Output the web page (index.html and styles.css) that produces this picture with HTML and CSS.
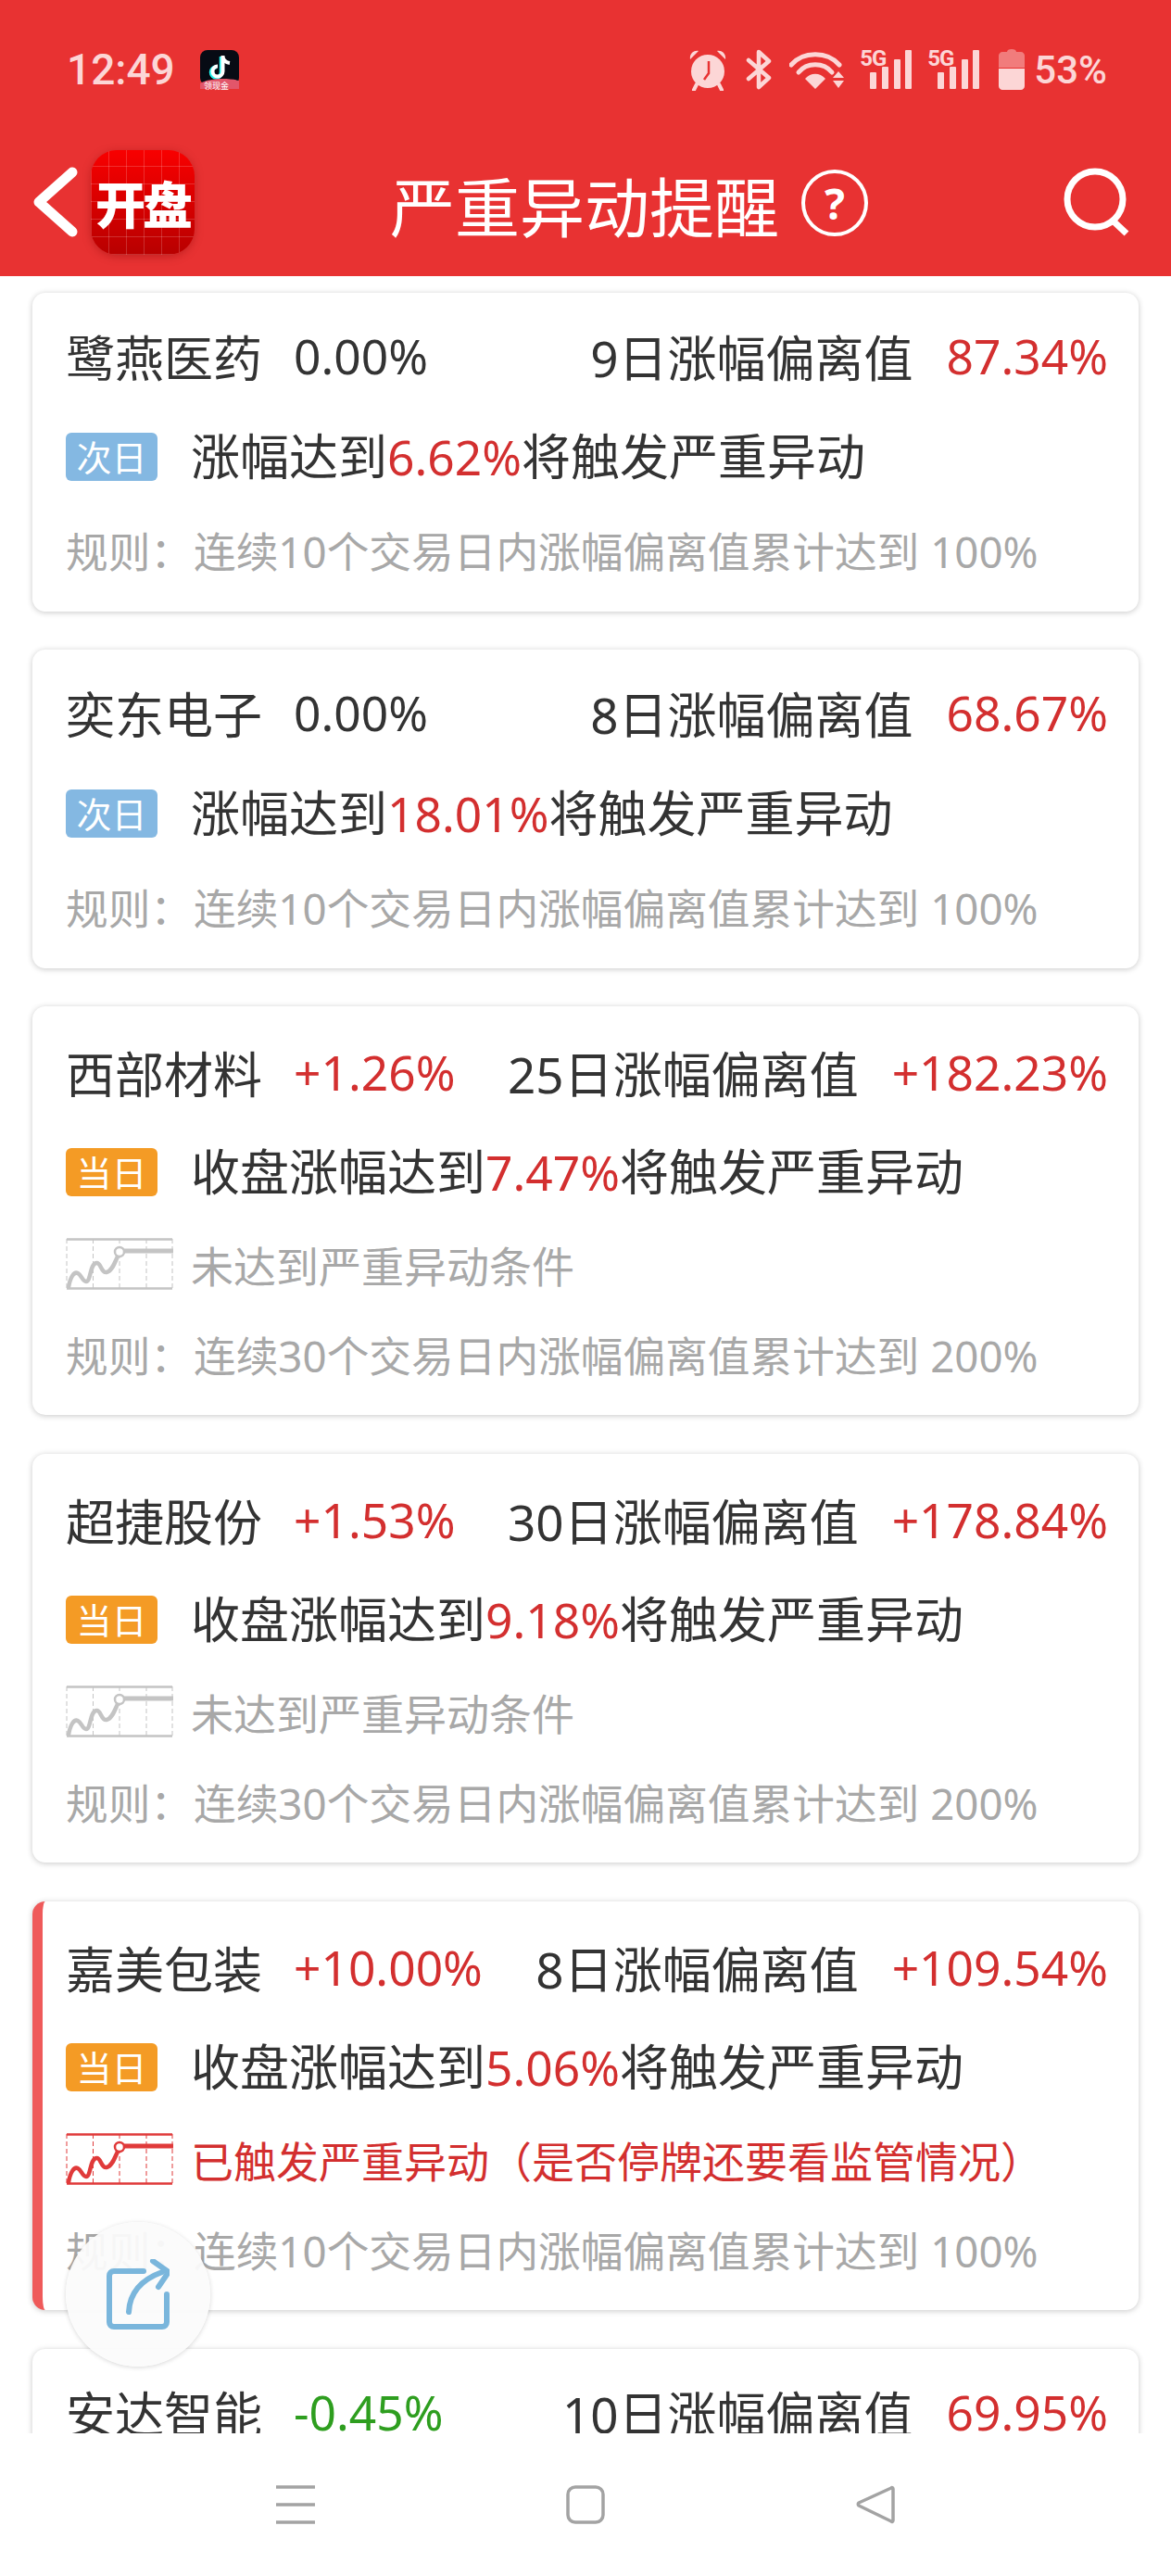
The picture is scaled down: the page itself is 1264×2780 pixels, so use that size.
FILE: index.html
```html
<!DOCTYPE html>
<html lang="zh-CN">

<head>
    <meta charset="UTF-8">
    <meta name="viewport" content="width=device-width, initial-scale=1.0">
    <title>严重异动提醒</title>
    <link rel="stylesheet" href="styles.css">
</head>

<body>
    <svg class="defs" width="0" height="0">
        <symbol id="trend" viewBox="0 0 116 56">
            <path d="M1 1.5H115M1 54.5H115" fill="none" stroke="currentColor" stroke-width="2.5" />
            <path d="M1 1V54M29.500 1V54M58 1V54M87 1V54M115 1V54" fill="none" stroke="currentColor" stroke-width="1" stroke-dasharray="5 3" />
            <path d="M3 53C5 42 9 36 13 38C17 40 18 47 22 47C27 47 26 28 33 27C38 26 38 38 44 37C50 36 53 26 56 20" fill="none" stroke="currentColor" stroke-width="4.500" stroke-linecap="round" />
            <circle cx="58" cy="15" r="5" fill="#fff" stroke="currentColor" stroke-width="2.500" />
            <path d="M63 14H116" fill="none" stroke="currentColor" stroke-width="5" />
        </symbol>
        <symbol id="signal" viewBox="0 0 56 42">
            <rect x="11" y="24" width="7" height="18" rx="1" fill="currentColor" />
            <rect x="24" y="18" width="7" height="24" rx="1" fill="currentColor" />
            <rect x="37" y="10" width="7" height="32" rx="1" fill="currentColor" />
            <rect x="49" y="0" width="7" height="42" rx="1" fill="currentColor" />
        </symbol>
    </svg>

    <header class="app-header">
        <div class="status-bar">
            <span class="clock">12:49</span>
            <div class="notif-icon">
                <svg viewBox="0 0 42 42" width="42" height="42">
                    <rect width="42" height="38" rx="8" fill="#070b14" />
                    <path d="M23 7V24A5.500 5.500 0 1 1 17.500 18.500" fill="none" stroke="#25f4ee" stroke-width="4.500" />
                    <path d="M24.500 6V23A5.500 5.500 0 1 1 19 17.500M24.500 7C25 11 28 13.500 32 14" fill="none" stroke="#fff" stroke-width="4" />
                    <path d="M0 36C10 30 30 30 42 33V42H0Z" fill="#e2566a" />
                </svg>
                <span class="notif-label">领现金</span>
            </div>
            <div class="status-icons">
                <svg class="ic-alarm" viewBox="0 0 42 45" width="42" height="45">
                    <path d="M2 11C1 5 6 1 11 2ZM40 11C41 5 36 1 31 2Z" fill="currentColor" />
                    <circle cx="21" cy="24" r="18" fill="currentColor" />
                    <path d="M9 38L6 44M33 38L36 44" stroke="currentColor" stroke-width="4" stroke-linecap="round" />
                    <path d="M22 13V26L17 33" fill="none" stroke="#e83232" stroke-width="2.500" />
                </svg>
                <svg class="ic-bt" viewBox="0 0 28 44" width="28" height="44">
                    <path d="M3 12L25 31L14 41V3L25 13L3 32" fill="none" stroke="currentColor" stroke-width="4.500" stroke-linecap="round" stroke-linejoin="round" />
                </svg>
                <svg class="ic-wifi" viewBox="0 0 60 42" width="60" height="42">
                    <path d="M2 16C15 1 41 1 54 16" fill="none" stroke="currentColor" stroke-width="5" stroke-linecap="round" />
                    <path d="M10 24C19 13 37 13 46 24" fill="none" stroke="currentColor" stroke-width="5" stroke-linecap="round" />
                    <path d="M17 31C23 24 33 24 39 31L28 42Z" fill="currentColor" />
                    <path d="M47 30L53 23L59 30ZM47 33H59L53 41Z" fill="currentColor" />
                </svg>
                <div class="sim sim-first">
                    <span class="sim-label">5G</span>
                    <svg viewBox="0 0 56 42" width="56" height="42"><use href="#signal" /></svg>
                </div>
                <div class="sim sim-second">
                    <span class="sim-label">5G</span>
                    <svg viewBox="0 0 56 42" width="56" height="42"><use href="#signal" /></svg>
                </div>
                <svg class="ic-battery" viewBox="0 0 28 44" width="28" height="44">
                    <path d="M9 3C9 1 11 0 14 0C17 0 19 1 19 3H24C26 3 28 5 28 7V20H0V7C0 5 2 3 4 3Z" fill="currentColor" opacity="0.45" />
                    <path d="M0 21H28V40C28 42 26 44 24 44H4C2 44 0 42 0 40Z" fill="currentColor" />
                </svg>
                <span class="battery-text">53%</span>
            </div>
        </div>
        <div class="toolbar">
            <svg class="ic-back" viewBox="0 0 49 76" width="49" height="76">
                <path d="M43 6L7 38L43 70" fill="none" stroke="#fff" stroke-width="11" stroke-linecap="round" stroke-linejoin="round" />
            </svg>
            <div class="app-logo">开盘</div>
            <h1 class="page-title">严重异动提醒</h1>
            <span class="help-btn">?</span>
            <svg class="ic-search" viewBox="0 0 72 74" width="72" height="74">
                <circle cx="34" cy="34" r="30" fill="none" stroke="#fff" stroke-width="7" />
                <path d="M53 57L68 71" stroke="#fff" stroke-width="7" />
            </svg>
        </div>
    </header>

    <main class="list">
        <section class="card">
            <div class="row-top">
                <span class="name">鹭燕医药</span>
                <span class="pct">0.00%</span>
                <span class="label">9日涨幅偏离值</span>
                <span class="value red">87.34%</span>
            </div>
            <div class="row-trigger">
                <span class="tag tag-next">次日</span>
                <span class="trigger-text">涨幅达到<em class="red">6.62%</em>将触发严重异动</span>
            </div>
            <p class="rule"><span class="rule-key">规则：</span>连续10个交易日内涨幅偏离值累计达到 100%</p>
        </section>

        <section class="card">
            <div class="row-top">
                <span class="name">奕东电子</span>
                <span class="pct">0.00%</span>
                <span class="label">8日涨幅偏离值</span>
                <span class="value red">68.67%</span>
            </div>
            <div class="row-trigger">
                <span class="tag tag-next">次日</span>
                <span class="trigger-text">涨幅达到<em class="red">18.01%</em>将触发严重异动</span>
            </div>
            <p class="rule"><span class="rule-key">规则：</span>连续10个交易日内涨幅偏离值累计达到 100%</p>
        </section>

        <section class="card card-tall">
            <div class="row-top">
                <span class="name">西部材料</span>
                <span class="pct red">+1.26%</span>
                <span class="label">25日涨幅偏离值</span>
                <span class="value red">+182.23%</span>
            </div>
            <div class="row-trigger">
                <span class="tag tag-today">当日</span>
                <span class="trigger-text">收盘涨幅达到<em class="red">7.47%</em>将触发严重异动</span>
            </div>
            <div class="row-state">
                <svg class="trend" width="116" height="56"><use href="#trend" /></svg>
                <span>未达到严重异动条件</span>
            </div>
            <p class="rule"><span class="rule-key">规则：</span>连续30个交易日内涨幅偏离值累计达到 200%</p>
        </section>

        <section class="card card-tall">
            <div class="row-top">
                <span class="name">超捷股份</span>
                <span class="pct red">+1.53%</span>
                <span class="label">30日涨幅偏离值</span>
                <span class="value red">+178.84%</span>
            </div>
            <div class="row-trigger">
                <span class="tag tag-today">当日</span>
                <span class="trigger-text">收盘涨幅达到<em class="red">9.18%</em>将触发严重异动</span>
            </div>
            <div class="row-state">
                <svg class="trend" width="116" height="56"><use href="#trend" /></svg>
                <span>未达到严重异动条件</span>
            </div>
            <p class="rule"><span class="rule-key">规则：</span>连续30个交易日内涨幅偏离值累计达到 200%</p>
        </section>

        <section class="card card-tall card-hit">
            <div class="row-top">
                <span class="name">嘉美包装</span>
                <span class="pct red">+10.00%</span>
                <span class="label">8日涨幅偏离值</span>
                <span class="value red">+109.54%</span>
            </div>
            <div class="row-trigger">
                <span class="tag tag-today">当日</span>
                <span class="trigger-text">收盘涨幅达到<em class="red">5.06%</em>将触发严重异动</span>
            </div>
            <div class="row-state state-hit">
                <svg class="trend" width="116" height="56"><use href="#trend" /></svg>
                <span>已触发严重异动（是否停牌还要看监管情况）</span>
            </div>
            <p class="rule"><span class="rule-key">规则：</span>连续10个交易日内涨幅偏离值累计达到 100%</p>
        </section>

        <section class="card">
            <div class="row-top">
                <span class="name">安达智能</span>
                <span class="pct green">-0.45%</span>
                <span class="label">10日涨幅偏离值</span>
                <span class="value red">69.95%</span>
            </div>
        </section>
    </main>

    <nav class="nav-bar">
        <svg viewBox="0 0 42 42" width="42" height="42">
            <path d="M0 2H42M0 21H42M0 40H42" stroke="#a3a3a3" stroke-width="3.500" />
        </svg>
        <svg viewBox="0 0 42 42" width="42" height="42">
            <rect x="2" y="2" width="38" height="38" rx="8" fill="none" stroke="#a3a3a3" stroke-width="3.500" />
        </svg>
        <svg viewBox="0 0 42 42" width="42" height="42">
            <path d="M38 3C39 2 40 3 40 4V38C40 39 39 40 38 39L3 22C2 21 2 20 3 19Z" fill="none" stroke="#a3a3a3" stroke-width="3.500" stroke-linejoin="round" />
        </svg>
    </nav>

    <button class="share-btn">
        <svg viewBox="0 0 68 76" width="68" height="76">
            <path d="M40 13H8C5 13 3 15 3 18V68C3 71 5 73 8 73H60C63 73 65 71 65 68V38" fill="none" stroke="#7ab6dc" stroke-width="6" stroke-linecap="round" />
            <path d="M24 57C25 36 38 22 60 14" fill="none" stroke="#7ab6dc" stroke-width="6" stroke-linecap="round" />
            <path d="M50 2L67 14L56 30" fill="none" stroke="#7ab6dc" stroke-width="6" stroke-linecap="round" stroke-linejoin="round" />
        </svg>
    </button>
</body>

</html>
```
FILE: styles.css
```css
* {
    box-sizing: border-box;
}

html,
body {
    margin: 0;
    height: 2780px;
    overflow: hidden;
}

body {
    position: relative;
    background-color: #fff;
    color: #333;
    font-family: "Noto Sans", "Noto Sans CJK SC", sans-serif;
    font-size: 53px;
}

svg {
    display: block;
    flex-shrink: 0;
}

.defs {
    position: absolute;
}

/* header */
.app-header {
    height: 298px;
    background-color: #e83232;
}

.status-bar {
    display: flex;
    align-items: center;
    height: 150px;
    padding-left: 72px;
    color: #fcd6d6;
}

.clock {
    width: 144px;
    font-family: Roboto, sans-serif;
    font-size: 46px;
    font-weight: 500;
}

.notif-icon {
    position: relative;
    width: 42px;
    height: 42px;
}

.notif-label {
    position: absolute;
    left: 4px;
    bottom: -2px;
    color: #fff;
    font-size: 9px;
    line-height: 10px;
}

.status-icons {
    display: flex;
    align-items: center;
    margin-left: auto;
    padding-right: 69px;
}

.ic-bt {
    margin-left: 20px;
}

.ic-wifi {
    margin-left: 19px;
}

.sim {
    position: relative;
    width: 56px;
    height: 42px;
}

.sim-first {
    margin-left: 16px;
}

.sim-second {
    margin-left: 17px;
}

.sim-label {
    position: absolute;
    left: 0;
    top: -4px;
    font-family: Roboto, sans-serif;
    font-size: 24px;
    font-weight: 700;
    letter-spacing: -1px;
    line-height: 26px;
}

.ic-battery {
    margin-left: 21px;
}

.battery-text {
    margin-left: 10px;
    font-family: Roboto, sans-serif;
    font-size: 42px;
    font-weight: 500;
}

.toolbar {
    display: flex;
    align-items: center;
    height: 136px;
    padding: 0 44px 0 35px;
    color: #fff;
}

.app-logo {
    display: flex;
    align-items: center;
    justify-content: center;
    width: 112px;
    height: 113px;
    margin-left: 14px;
    border-radius: 28px;
    background:
        repeating-linear-gradient(90deg, rgba(255, 255, 255, 0.18) 0 1px, transparent 1px 19px),
        repeating-linear-gradient(0deg, rgba(255, 255, 255, 0.18) 0 1px, transparent 1px 19px),
        linear-gradient(#f80000, #b80000);
    box-shadow: 0 2px 10px rgba(120, 0, 0, 0.35);
    font-family: "Noto Sans CJK SC", sans-serif;
    font-size: 54px;
    font-weight: 900;
    letter-spacing: -3px;
}

.page-title {
    margin: 6px 0 0 211px;
    font-family: "Noto Sans CJK SC", sans-serif;
    font-size: 70px;
    font-weight: 400;
    line-height: 90px;
}

.help-btn {
    display: flex;
    align-items: center;
    justify-content: center;
    width: 72px;
    height: 72px;
    margin: 2px 0 0 24px;
    border: 4px solid #fff;
    border-radius: 50%;
    font-size: 46px;
    font-weight: 700;
}

.ic-search {
    margin-left: auto;
}

/* list */
.list {
    height: 2328px;
    padding: 18px 35px 0;
    overflow: hidden;
}

.card {
    height: 344px;
    margin-bottom: 41px;
    padding: 38px 33px 0 36px;
    border-radius: 14px;
    background-color: #fff;
    box-shadow: 0 1px 6px rgba(0, 0, 0, 0.22);
}

.card-tall {
    height: 441px;
    margin-bottom: 42px;
    padding-top: 41px;
}

.card-hit {
    border-left: 11px solid #ef5a5a;
    padding-left: 25px;
}

.row-top {
    display: flex;
    align-items: center;
    height: 60px;
}

.pct {
    margin-left: 34px;
}

.label {
    margin-left: auto;
}

.value {
    margin-left: 36px;
}

.pct,
.value {
    font-size: 51.5px;
}

.red {
    color: #d32f2f;
}

.green {
    color: #2e9e1f;
}

em {
    font-size: 51.5px;
    font-style: normal;
}

.row-trigger {
    display: flex;
    align-items: center;
    height: 60px;
    margin-top: 49px;
}

.card-tall .row-trigger {
    margin-top: 48px;
}

.trigger-text {
    padding-bottom: 6px;
    font-size: 53px;
}

.tag {
    width: 99px;
    height: 52px;
    margin-right: 36px;
    border-radius: 6px;
    color: #fff;
    font-size: 38px;
    line-height: 52px;
    text-align: center;
}

.tag-next {
    background-color: #84b8e2;
}

.tag-today {
    background-color: #f49b25;
}

.row-state {
    display: flex;
    align-items: center;
    height: 60px;
    margin-top: 39px;
    color: #a8a8a8;
    font-size: 46px;
}

.trend {
    margin-right: 19px;
    color: #c4c4c4;
}

.state-hit {
    color: #d32f2f;
}

.state-hit .trend {
    color: #e03a3a;
}

.rule {
    display: flex;
    align-items: center;
    height: 60px;
    margin: 40px 0 0;
    color: #a8a8a8;
    font-size: 45.7px;
}

.card-tall .rule {
    margin-top: 37px;
}

.rule-key {
    width: 138px;
}

/* bottom */
.nav-bar {
    display: flex;
    align-items: center;
    justify-content: center;
    gap: 271px;
    height: 154px;
    background-color: #fff;
}

.share-btn {
    position: absolute;
    left: 71px;
    top: 2398px;
    display: flex;
    align-items: center;
    justify-content: center;
    width: 156px;
    height: 156px;
    padding: 0;
    border: none;
    border-radius: 50%;
    background-color: rgba(251, 251, 251, 0.94);
    box-shadow: 0 1px 5px rgba(0, 0, 0, 0.16);
}
```
